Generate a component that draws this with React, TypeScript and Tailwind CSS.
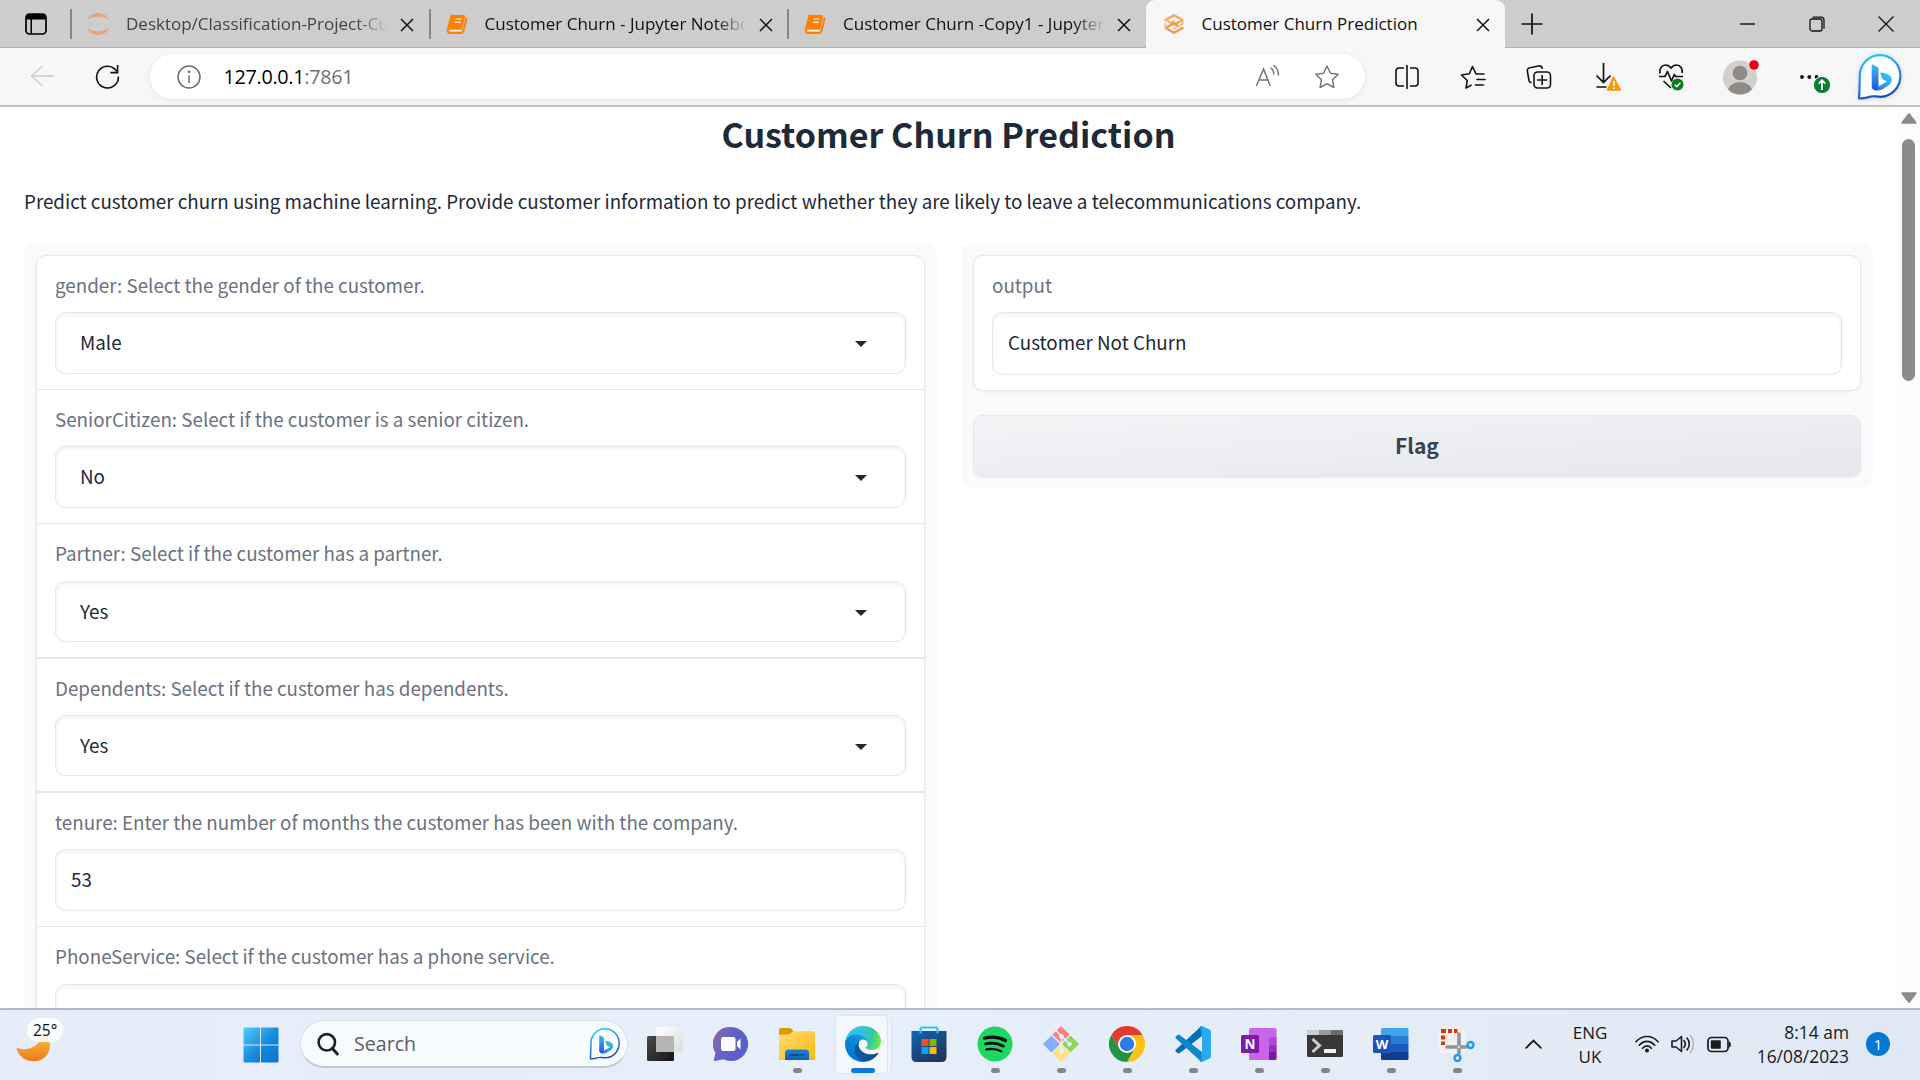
import React from 'react';

const UI = "font-['Open_Sans',sans-serif]";
const BODY = "font-['Noto_Sans_CJK_SC',sans-serif]";

/* ---------- Browser icons ---------- */

function JupyterIcon() {
  return (
    <svg width="22" height="24" viewBox="0 0 22 24" fill="#e7a57c">
      <path d="M0 8.2C2 3 6.200 1 11 1s9 2 11 7.200C19 5.800 15.500 4.800 11 4.800S3 5.800 0 8.200z" />
      <path d="M0 15.800C2 21 6.200 23 11 23s9-2 11-7.200c-3 2.400-6.500 3.400-11 3.400S3 18.200 0 15.800z" />
    </svg>
  );
}

function NotebookIcon() {
  return (
    <svg width="22" height="22" viewBox="0 0 22 22">
      <path d="M6 2h11.500c1.200 0 1.800.8 1.500 2l-3 12.500H4c-1.500 0-2 .8-1.800 2" fill="#ff8000" />
      <path d="M5.500 2.500 2 15.500c-.8 3 .2 4.500 2.500 4.500H15c1.200 0 2-.6 2.400-2L20.500 5.500" fill="none" stroke="#ff8000" strokeWidth="2" strokeLinecap="round" />
      <path d="M3 15 6 2h11l-3 13z" fill="#ff8000" />
      <path d="M9.500 6h6M8.800 9.300h6M4.500 17.500H15" stroke="#fff3e6" strokeWidth="1.200" />
    </svg>
  );
}

function GradioIcon() {
  return (
    <svg width="22" height="22" viewBox="0 0 22 22" fill="none" strokeLinejoin="round" strokeLinecap="round">
      <path d="M2.500 7 11 2.300 19.500 7 11 11.700 8 10" stroke="#f7a65a" strokeWidth="2.400" />
      <path d="M2.500 7 8 10l3-1.700" stroke="#f9b878" strokeWidth="2.200" />
      <path d="M19.500 15 11 19.700 2.500 15l8.500-4.700 3 1.700" stroke="#f19a4a" strokeWidth="2.400" />
      <path d="M19.500 11 14 14l-3 1.700M2.500 11v4M19.500 7v4" stroke="#f9b878" strokeWidth="1.900" />
    </svg>
  );
}

function CloseX({ size }: { size: number }) {
  return (
    <svg width={size} height={size} viewBox="0 0 14 14" stroke="#111" strokeWidth="1.500" className="shrink-0">
      <path d="M1 1l12 12M13 1L1 13" />
    </svg>
  );
}

function Tab({ icon, text, active, dim }: { icon: React.ReactNode; text: string; active?: boolean; dim?: boolean }) {
  return (
    <div
      className={
        active
          ? 'flex h-12 w-[359px] items-center rounded-t-[9px] bg-[#f7f7f7] pl-[17px]'
          : 'flex h-12 w-[358.5px] items-center pl-[17px]'
      }
    >
      <div className="flex w-[22px] justify-center">{icon}</div>
      <div
        className={`${UI} ml-[17px] w-[262px] overflow-hidden text-[17px] leading-[26px] whitespace-nowrap ${dim ? 'text-[#444]' : 'text-[#111]'} ${
          active ? '' : '[mask-image:linear-gradient(to_right,#000_88%,transparent)]'
        }`}
      >
        {text}
      </div>
      <div className="mt-px ml-3 flex">
        <CloseX size={14} />
      </div>
    </div>
  );
}

function TabSeparator() {
  return <div className="-mr-[2px] h-[30px] w-[2px] bg-[#858585]" />;
}

function BingLogo({ size, id }: { size: number; id: string }) {
  return (
    <svg width={size} height={size} viewBox="0 0 46 46">
      <defs>
        <linearGradient id={`${id}r`} x1="0.300" y1="0" x2="0.600" y2="1">
          <stop offset="0" stopColor="#21c8f6" />
          <stop offset="0.500" stopColor="#2f86e8" />
          <stop offset="1" stopColor="#1747c4" />
        </linearGradient>
        <linearGradient id={`${id}b`} x1="0" y1="0" x2="0" y2="1">
          <stop offset="0" stopColor="#3bbdf7" />
          <stop offset="1" stopColor="#1f4fe0" />
        </linearGradient>
        <linearGradient id={`${id}c`} x1="1" y1="0" x2="0" y2="1">
          <stop offset="0" stopColor="#37d8e6" />
          <stop offset="1" stopColor="#2468ea" />
        </linearGradient>
      </defs>
      <path
        d="M2 44.200C2.700 37 2.500 30 2.800 22.500A20.300 20.800 0 1 1 23.300 42.800C19 42.800 17 41.600 13.500 42.600 9.500 43.800 6 44.700 2 44.200z"
        fill="#fdfdff"
        stroke={`url(#${id}r)`}
        strokeWidth="2.200"
        strokeLinejoin="round"
      />
      <path d="M24.500 18.500c-.8-.3-1.300.4-1 1.200l2.300 5.600 4.200 2.200-8.500 5-4.700 3c3.500 2 7 .8 9.500-.8l5.200-3.200c5-3.500 4-9.500-1-11.500z" fill={`url(#${id}c)`} />
      <path d="M15.500 10.600 20 12.700c1 .5 1.500 1.200 1.500 2.300v17.500l-1.600 3.800c-3 .6-5.200-1.200-5.200-4V11.100c0-.5.400-.7.800-.5z" fill={`url(#${id}b)`} />
    </svg>
  );
}

function Slot({ children, className = 'w-[66px]' }: { children: React.ReactNode; className?: string }) {
  return <div className={`flex shrink-0 items-center justify-center ${className}`}>{children}</div>;
}

function Toolbar() {
  return (
    <div className="flex h-[57px] shrink-0 items-center bg-[#f7f7f7] pl-[30px]">
      <svg width="24" height="22" viewBox="0 0 24 24" preserveAspectRatio="none" fill="none" stroke="#cbcbcb" strokeWidth="1.500" className="-mt-[2px]">
        <path d="M12 1.500 1.500 12 12 22.500M1.500 12H24" />
      </svg>
      <svg width="25" height="25" viewBox="0 0 26 26" fill="none" stroke="#111" strokeWidth="1.700" className="ml-[41px]">
        <path d="M22.500 7.500A11.300 11.300 0 1 0 24.300 13M23.500 1v8H16" />
      </svg>
      <div className="ml-[30px] flex h-[45px] w-[1215px] items-center rounded-full bg-white pl-[27px] shadow-[0_1px_5px_rgba(0,0,0,0.090)]">
        <svg width="24" height="24" viewBox="0 0 24 24" fill="none" stroke="#6c6c6c" strokeWidth="1.500">
          <circle cx="12" cy="12" r="11" />
          <path d="M12 10.500v7.500" />
          <circle cx="12" cy="6.800" r="0.600" fill="#6c6c6c" />
        </svg>
        <div className={`${UI} ml-[22.500px] text-[19.800px] leading-7 tracking-[-0.300px] text-black`}>
          127.0.0.1<span className="text-[#6f6f6f]">:7861</span>
        </div>
        <div className="flex-1" />
        <svg width="26" height="24" viewBox="0 0 26 24" fill="none" stroke="#767676" strokeWidth="1.500" strokeLinecap="round" className="-mt-[2px]">
          <path d="M2.500 21.500 9.500 5l6.500 16.500M5 16h9M17 4c2 1.600 2.800 3.500 2.800 6M20 1.500c3 2.200 4.300 5.500 4.500 9.500" />
        </svg>
        <svg width="26" height="26" viewBox="0 0 26 26" fill="none" stroke="#767676" strokeWidth="1.500" strokeLinejoin="round" className="mr-[25px] ml-[34px]">
          <path d="m13 2 3.400 7.200 7.800 1-5.700 5.500 1.400 7.800L13 19.700l-6.900 3.800 1.400-7.800-5.700-5.500 7.800-1z" />
        </svg>
      </div>
      <div className="ml-[9px] flex items-center">
        <Slot>
          <svg width="24" height="24" viewBox="0 0 24 24" fill="none" stroke="#111" strokeWidth="1.600">
            <path d="M9 3H4C2 3 1 4 1 6v12c0 2 1 3 3 3h5M15 3h5c2 0 3 1 3 3v12c0 2-1 3-3 3h-5M12 0v24" />
          </svg>
        </Slot>
        <Slot>
          <svg width="26" height="24" viewBox="0 0 26 24" fill="none" stroke="#111" strokeWidth="1.600" strokeLinejoin="round" strokeLinecap="round">
            <path d="M11 20.200 6 23l1.200-7.500L1.500 10l7.800-1.200L12.500 1.500 16 9h8M17 14.500h8M15.500 20h8" />
          </svg>
        </Slot>
        <Slot>
          <svg width="26" height="26" viewBox="0 0 26 26" fill="none" stroke="#111" strokeWidth="1.600" strokeLinecap="round">
            <path d="M5 18.500C3.800 18.200 3.200 17.500 3 16.500L1.400 7.500C1 5.500 2 4.200 4 3.800L12.500 2c2-.4 3.200.4 3.700 2.300" />
            <rect x="8" y="8" width="16.500" height="16" rx="3.500" />
            <path d="M16.200 11.500v9M11.700 16h9" />
          </svg>
        </Slot>
        <Slot>
          <svg width="28" height="30" viewBox="0 0 28 30" fill="none" stroke="#111" strokeWidth="1.700" className="ml-[6px]">
            <path d="M9.500 1v19M2.500 13.500l7 7 7-7M2.500 25h10" />
            <path d="M19.500 15 13.500 28h13z" fill="#f59a0c" stroke="#f59a0c" strokeWidth="1.500" strokeLinejoin="round" />
            <path d="M20 19v5M20 25.500v1.500" stroke="#fff" />
          </svg>
        </Slot>
        <Slot>
          <svg width="26" height="28" viewBox="0 0 26 28" fill="none" stroke="#111" strokeWidth="1.700" strokeLinejoin="round">
            <path d="M2 10.500C1 5.500 4 2 7.500 2c2.500 0 4 1 5.500 3 1.500-2 3-3 5.500-3 4 0 6.500 4 5.500 8M1 13.500h6l2.500-5 4 9.500 2.800-6.500 1.200 2H25M5.500 18l7.500 7" />
            <circle cx="19.500" cy="21.500" r="6" fill="#0f7b1c" stroke="none" />
            <path d="m16.800 21.700 2 2 3.500-4" stroke="#fff" strokeWidth="1.500" />
          </svg>
        </Slot>
        <Slot className="w-[72px]">
          <svg width="36" height="36" viewBox="0 0 36 36" className="ml-[2px]">
            <defs>
              <clipPath id="avatarClip">
                <circle cx="17" cy="18.500" r="17" />
              </clipPath>
            </defs>
            <circle cx="17" cy="18.500" r="17" fill="#d2d0ce" />
            <g clipPath="url(#avatarClip)" fill="#8d8a87">
              <circle cx="17" cy="14" r="7.300" />
              <ellipse cx="17" cy="32" rx="12" ry="9" />
            </g>
            <circle cx="31" cy="6" r="5.500" fill="#f7f7f7" />
            <circle cx="31" cy="6" r="4.800" fill="#e60012" />
          </svg>
        </Slot>
        <Slot>
          <svg width="34" height="34" viewBox="0 0 34 34" className="ml-[11px]">
            <g fill="#111">
              <circle cx="4" cy="17" r="1.900" />
              <circle cx="11.300" cy="17" r="1.900" />
              <circle cx="18.600" cy="17" r="1.900" />
            </g>
            <circle cx="24" cy="25" r="8.600" fill="#0f7c33" stroke="#f7f7f7" strokeWidth="1" />
            <path d="M24 30v-9.500M20.700 23.700 24 20.300l3.300 3.400" stroke="#fff" strokeWidth="1.700" fill="none" />
          </svg>
        </Slot>
        <Slot className="ml-[9px] w-[58px] drop-shadow-sm">
          <BingLogo size={46} id="tb" />
        </Slot>
      </div>
    </div>
  );
}

function TabStrip() {
  return (
    <div className="flex h-12 shrink-0 items-center bg-[#cdcdcd] shadow-[inset_0_-1px_1px_rgba(0,0,0,0.150)]">
      <div className="flex w-[70px] justify-center">
        <svg width="22" height="22" viewBox="0 0 22 22" className="ml-[2px]">
          <rect x="1" y="1" width="20" height="20" rx="3.500" fill="none" stroke="#000" strokeWidth="1.700" />
          <path d="M1 6.500V4a3 3 0 0 1 3-3h14a3 3 0 0 1 3 3v2.500z" />
          <path d="M6.200 6v15" stroke="#000" strokeWidth="1.500" />
        </svg>
      </div>
      <TabSeparator />
      <Tab icon={<JupyterIcon />} text="Desktop/Classification-Project-Customer" dim />
      <TabSeparator />
      <Tab icon={<NotebookIcon />} text="Customer Churn - Jupyter Notebook" />
      <TabSeparator />
      <Tab icon={<NotebookIcon />} text="Customer Churn -Copy1 - Jupyter Notebook" />
      <Tab icon={<GradioIcon />} text="Customer Churn Prediction" active />
      <svg width="22" height="22" viewBox="0 0 22 22" stroke="#111" strokeWidth="1.700" className="ml-4">
        <path d="M11 0.500v21M0.500 11h21" />
      </svg>
      <div className="flex-1" />
      <svg width="15" height="16" viewBox="0 0 15 16" stroke="#111" strokeWidth="1.400">
        <path d="M0 8h15" />
      </svg>
      <svg width="16" height="16" viewBox="0 0 16 16" fill="none" stroke="#111" strokeWidth="1.300" className="ml-[54px]">
        <rect x="1" y="3" width="12" height="12" rx="2" />
        <path d="M3.500 1.200h8.500a3 3 0 0 1 3 3v8.500" />
      </svg>
      <svg width="16" height="16" viewBox="0 0 16 16" stroke="#111" strokeWidth="1.300" className="mr-[26px] ml-[53px]">
        <path d="M0.500 0.500l15 15M15.500 0.500l-15 15" />
      </svg>
    </div>
  );
}

/* ---------- Page content ---------- */

type FieldData = { label: string; value: string; select: boolean; row: string; box: string };

const fields: FieldData[] = [
  { label: 'gender: Select the gender of the customer.', value: 'Male', select: true, row: 'h-[134px] border-b', box: 'mt-[11px] h-[62px]' },
  { label: 'SeniorCitizen: Select if the customer is a senior citizen.', value: 'No', select: true, row: 'h-[134px] border-b', box: 'mt-[11px] h-[62px]' },
  { label: 'Partner: Select if the customer has a partner.', value: 'Yes', select: true, row: 'h-[135px] border-b-2', box: 'mt-[12px] h-[61px]' },
  { label: 'Dependents: Select if the customer has dependents.', value: 'Yes', select: true, row: 'h-[134px] border-b-2', box: 'mt-[11px] h-[61px]' },
  { label: 'tenure: Enter the number of months the customer has been with the company.', value: '53', select: false, row: 'h-[134px] border-b', box: 'mt-[11px] h-[62px]' },
  { label: 'PhoneService: Select if the customer has a phone service.', value: '', select: true, row: 'h-[134px] border-b', box: 'mt-[12px] h-[62px]' },
];

function FieldBox({ value, select, box }: { value: string; select: boolean; box: string }) {
  return (
    <div
      className={`flex shrink-0 items-center rounded-[10px] border border-gray-200 bg-white text-gray-800 shadow-[inset_0_2px_4px_rgba(0,0,0,0.060)] ${box} ${
        select ? 'pl-6' : 'pl-[15px]'
      }`}
    >
      <span className="-mt-[2px] flex-1">{value}</span>
      {select && (
        <svg width="12" height="6" viewBox="0 0 12 6" fill="#1f2937" className="mt-[2px] mr-[38px]">
          <path d="M0 0h12L6 6z" />
        </svg>
      )}
    </div>
  );
}

function Field({ f }: { f: FieldData }) {
  return (
    <div className={`flex shrink-0 flex-col border-gray-200 px-[18px] pt-[14px] ${f.row}`}>
      <div className="h-[31px] leading-[30px] text-gray-500">{f.label}</div>
      <FieldBox value={f.value} select={f.select} box={f.box} />
    </div>
  );
}

function Page() {
  return (
    <div className={`${BODY} flex min-h-0 flex-1 overflow-hidden bg-white text-[18.800px] leading-[30px]`}>
      <div className="flex flex-1 flex-col pr-[24px] pl-[24px]">
        <h1 className="mt-[6px] text-center text-[34px] leading-[42px] font-bold text-gray-800">Customer Churn Prediction</h1>
        <p className="mt-[31px] text-gray-800">
          Predict customer churn using machine learning. Provide customer information to predict whether they are likely to leave a telecommunications
          company.
        </p>
        <div className="mt-[27px] flex min-h-0 flex-1 items-start gap-6">
          <div className="h-full w-[913px] overflow-hidden rounded-t-[12px] bg-gray-50 px-3 pt-3">
            <div className="flex flex-col rounded-t-[10px] border border-gray-200 bg-white shadow-[0_1px_3px_rgba(0,0,0,0.060)]">
              {fields.map((f) => (
                <Field key={f.label} f={f} />
              ))}
            </div>
          </div>
          <div className="flex h-[246px] w-[912px] flex-col rounded-[12px] bg-gray-50 px-3 pt-3">
            <div className="h-[136px] shrink-0 rounded-[10px] border border-gray-200 bg-white px-[18px] pt-[14px] shadow-[0_1px_3px_rgba(0,0,0,0.060)]">
              <div className="h-[31px] leading-[30px] text-gray-500">output</div>
              <FieldBox value="Customer Not Churn" select={false} box="mt-[11px] h-[63px] pb-px" />
            </div>
            <button className="mt-6 h-[62px] rounded-[10px] border border-gray-200 bg-linear-to-br from-gray-100 to-gray-200 pb-[3px] text-[21px] font-bold text-gray-700 shadow-[0_1px_2px_rgba(0,0,0,0.050)]">
              Flag
            </button>
          </div>
        </div>
      </div>
      <div className="flex w-[23px] flex-col items-center bg-[#fcfcfc] pt-[6px] pb-[5px]">
        <svg width="16" height="11" viewBox="0 0 16 11" fill="#8b8b8b">
          <path d="M7 .8a1.200 1.200 0 0 1 2 0l6.500 8.400c.5.800.2 1.600-.8 1.600H1.300c-1 0-1.300-.8-.8-1.600z" />
        </svg>
        <div className="mt-[15px] h-[242px] w-[13px] rounded-full bg-[#8b8b8b]" />
        <div className="flex-1" />
        <svg width="16" height="11" viewBox="0 0 16 11" fill="#8b8b8b">
          <path d="M7 10.200a1.200 1.200 0 0 0 2 0l6.500-8.400C16 1 15.700.2 14.700.2H1.300C.3.200 0 1 .5 1.800z" />
        </svg>
      </div>
    </div>
  );
}

/* ---------- Taskbar icons ---------- */

function WindowsLogo() {
  return (
    <svg width="36" height="36" viewBox="0 0 36 36">
      <defs>
        <linearGradient id="win" x1="0" y1="0" x2="36" y2="36" gradientUnits="userSpaceOnUse">
          <stop offset="0" stopColor="#4fd0fb" />
          <stop offset="0.550" stopColor="#1489dd" />
          <stop offset="1" stopColor="#0873ce" />
        </linearGradient>
      </defs>
      <path d="M1.500.5H17v17H.5v-16q0-1 1-1zM18 .5h16.500q1 0 1 1v16H18zM.5 18.500H17v17H1.500q-1 0-1-1zM18 18.500h17.500v16q0 1-1 1H18z" fill="url(#win)" />
    </svg>
  );
}

function TaskViewIcon() {
  return (
    <svg width="36" height="36" viewBox="0 0 36 36">
      <defs>
        <linearGradient id="tv1" x1="0" y1="0" x2="1" y2="1">
          <stop offset="0" stopColor="#4a4a4a" />
          <stop offset="1" stopColor="#151515" />
        </linearGradient>
        <linearGradient id="tv2" x1="0" y1="0" x2="1" y2="1">
          <stop offset="0" stopColor="#ffffff" />
          <stop offset="1" stopColor="#dcdcdc" />
        </linearGradient>
      </defs>
      <rect x="0" y="10" width="27" height="25" rx="1.500" fill="url(#tv1)" />
      <rect x="9" y="1" width="27" height="25" rx="1.500" fill="url(#tv2)" />
      <path d="M9 10h18v16H10q-1 0-1-1z" fill="#b5b5b5" />
    </svg>
  );
}

function ChatIcon() {
  return (
    <svg width="36" height="36" viewBox="0 0 36 36">
      <defs>
        <linearGradient id="chat" x1="0" y1="0.200" x2="1" y2="0.700">
          <stop offset="0" stopColor="#8a68a6" />
          <stop offset="0.500" stopColor="#6161c8" />
          <stop offset="1" stopColor="#5560cc" />
        </linearGradient>
      </defs>
      <path d="M18 1a17 17 0 1 1-7.500 32.200L2 35c-1 .2-1.500-.5-1.200-1.300L2.500 27A17 17 0 0 1 18 1z" fill="url(#chat)" />
      <rect x="8" y="11" width="14.500" height="14" rx="2.500" fill="#fff" />
      <path d="m24 16 3.500-3.500v11L24 20z" fill="#fff" />
    </svg>
  );
}

function FolderIcon() {
  return (
    <svg width="36" height="36" viewBox="0 0 36 36">
      <defs>
        <linearGradient id="fold" x1="0" y1="0" x2="1" y2="1">
          <stop offset="0" stopColor="#ffdc72" />
          <stop offset="1" stopColor="#fbb70e" />
        </linearGradient>
        <linearGradient id="foldb" x1="0" y1="0" x2="0" y2="1">
          <stop offset="0" stopColor="#1784d8" />
          <stop offset="1" stopColor="#0f62ac" />
        </linearGradient>
      </defs>
      <path d="M0 3.500Q0 2 1.500 2H10q1.500 0 2.500 1l2 2-3 4H0z" fill="#dc9a06" />
      <path d="M0 8.500h9q1.500 0 2.500-1l1.500-1.500q.8-.8 2-.8h19.500q1.500 0 1.500 1.500V33q0 1-1 1H1q-1 0-1-1z" fill="url(#fold)" />
      <path d="M6 34v-7q0-3.500 3.500-3.500h17q3.500 0 3.500 3.500v7z" fill="url(#foldb)" />
      <rect x="10.500" y="28" width="15" height="1.800" rx="0.900" fill="#0a4887" />
    </svg>
  );
}

function EdgeIcon() {
  return (
    <svg width="36" height="36" viewBox="0 0 256 256">
      <defs>
        <linearGradient id="edA" x1="63" y1="178" x2="241" y2="178" gradientUnits="userSpaceOnUse">
          <stop offset="0" stopColor="#0c59a4" />
          <stop offset="1" stopColor="#114a8b" />
        </linearGradient>
        <linearGradient id="edC" x1="157" y1="100" x2="46" y2="221" gradientUnits="userSpaceOnUse">
          <stop offset="0" stopColor="#1b9de2" />
          <stop offset="0.160" stopColor="#1595df" />
          <stop offset="0.670" stopColor="#0680d7" />
          <stop offset="1" stopColor="#0078d4" />
        </linearGradient>
        <radialGradient id="edE" cx="26" cy="45" r="230" gradientUnits="userSpaceOnUse">
          <stop offset="0" stopColor="#35c1f1" />
          <stop offset="0.400" stopColor="#2fc2df" />
          <stop offset="0.750" stopColor="#36c9a0" />
          <stop offset="1" stopColor="#66eb4a" />
        </radialGradient>
      </defs>
      <path fill="url(#edA)" d="M231 190.500c-3.400 1.800-6.900 3.400-10.500 4.700a101.900 101.900 0 0 1-35.900 6.400c-47.300 0-88.500-32.500-88.500-74.300a31.500 31.500 0 0 1 16.400-27.300c-42.800 1.800-53.800 46.400-53.800 72.500 0 74 68.100 81.400 82.800 81.400 7.900 0 19.800-2.300 27-4.600l1.300-.4a128.300 128.300 0 0 0 66.600-52.800 4 4 0 0 0-5.400-5.600z" />
      <path fill="url(#edC)" d="M105.700 241.400a79.200 79.200 0 0 1-22.700-21.300 80.700 80.700 0 0 1 29.500-120c3.200-1.500 8.500-4.100 15.600-4a32.400 32.400 0 0 1 25.700 13 31.900 31.900 0 0 1 6.300 18.700c0-.2 24.500-79.600-80-79.600-43.900 0-80 41.600-80 78.200a130.200 130.200 0 0 0 12.100 56 128 128 0 0 0 156.400 67 75.500 75.500 0 0 1-62.800-8z" />
      <path fill="url(#edE)" d="M152.300 148.900c-.9 1-3.400 2.500-3.400 5.600 0 2.600 1.700 5.200 4.800 7.300 14.300 10 41.400 8.600 41.500 8.600a59.600 59.600 0 0 0 30.300-8.300 61.400 61.400 0 0 0 30.400-52.900c.3-22.400-8-37.300-11.300-43.900C223.500 23.900 177.700 0 128 0A128 128 0 0 0 0 126.200c.5-36.500 36.800-66 80-66 3.500 0 23.500.3 42 10a72.600 72.600 0 0 1 30.900 29.300c6.100 10.600 7.200 24.100 7.200 29.500s-2.700 13.300-7.800 19.900z" />
    </svg>
  );
}

function StoreIcon() {
  return (
    <svg width="36" height="36" viewBox="0 0 36 36">
      <defs>
        <linearGradient id="store" x1="0" y1="0" x2="0.600" y2="1">
          <stop offset="0" stopColor="#0d66b4" />
          <stop offset="1" stopColor="#22355f" />
        </linearGradient>
      </defs>
      <path d="M.5 5h35v26q0 5-5 5h-25q-5 0-5-5z" fill="url(#store)" />
      <path d="M9.500 7.500V3q0-1.500 1.500-1.500h14q1.500 0 1.500 1.500v4.500" fill="none" stroke="#2fc3f6" strokeWidth="2" />
      <rect x="10.500" y="13" width="7" height="7" fill="#f25022" />
      <rect x="18.500" y="13" width="7" height="7" fill="#7fba00" />
      <rect x="10.500" y="21" width="7" height="7" fill="#00a4ef" />
      <rect x="18.500" y="21" width="7" height="7" fill="#ffb900" />
    </svg>
  );
}

function SpotifyIcon() {
  return (
    <svg width="36" height="36" viewBox="0 0 36 36" fill="none" stroke="#0b0b0b" strokeLinecap="round">
      <circle cx="18" cy="18" r="17.500" fill="#1ed760" stroke="none" />
      <path d="M7.500 12.200c7-1.900 14.500-1.200 21 2.300" strokeWidth="3.200" />
      <path d="M8.500 18c6-1.600 12.500-.9 18 2.200" strokeWidth="2.700" />
      <path d="M9.500 23.400c5-1.200 10.200-.6 14.800 2" strokeWidth="2.200" />
    </svg>
  );
}

function GitIcon() {
  return (
    <svg width="36" height="36" viewBox="0 0 36 36">
      <path d="m18 0 8.500 8.500L18 17 9.500 8.500z" fill="#fb8080" />
      <path d="m27.500 9.500 8.500 8.500-8.500 8.500L19 18z" fill="#8fd45c" />
      <path d="m8.500 9.500 8.500 8.500-8.500 8.500L0 18z" fill="#82aefc" />
      <path d="m18 19 8.500 8.500L18 36l-8.500-8.500z" fill="#ffe27d" />
      <path d="m13 4.500 5.500 5.500v8M18.500 10l8 8M18.500 18v6" stroke="#e8eefa" strokeWidth="1.700" fill="none" />
      <circle cx="18.500" cy="10.500" r="2.300" fill="#e8eefa" />
      <circle cx="18.500" cy="25" r="2.500" fill="#e8eefa" />
      <circle cx="26.500" cy="18" r="2.300" fill="#e8eefa" />
    </svg>
  );
}

function ChromeIcon() {
  return (
    <svg width="36" height="36" viewBox="0 0 36 36">
      <path d="M18 9h15.600A18 18 0 0 1 18 36l7.800-13.500z" fill="#fbc116" />
      <path d="M2.400 9A18 18 0 0 0 18 36l7.800-13.500H10.200z" fill="#229342" />
      <path d="M2.400 9a18 18 0 0 1 31.200 0H18l-7.800 13.500z" fill="#e33b2e" />
      <circle cx="18" cy="18" r="9" fill="#fff" />
      <circle cx="18" cy="18" r="7.200" fill="#2f7bea" />
    </svg>
  );
}

function CodeIcon() {
  return (
    <svg width="36" height="36" viewBox="0 0 36 36">
      <path d="M26.500 0 1 23.500q-1.200 1 0 2.200L2.600 27q1 .9 2.100.1L27 10z" fill="#0471b6" />
      <path d="M26.500 36 1 12.500q-1.200-1 0-2.200L2.600 9q1-.9 2.100-.1L27 26z" fill="#0c87cf" />
      <path d="m27 0 7.500 3.600Q36 4.300 36 6v24q0 1.700-1.500 2.400L27 36z" fill="#29a9ef" />
      <path d="M27 0v36q-1.500 0-2.500-1l2.500-9V10l-2.500-9Q25.500 0 27 0z" fill="#1b8fd8" />
    </svg>
  );
}

function OneNoteIcon() {
  return (
    <svg width="36" height="36" viewBox="0 0 36 36">
      <rect x="8" y="2" width="27.500" height="32" rx="1.500" fill="#ca64ea" />
      <path d="M28 11h7.500v8H28z" fill="#ae4bd5" />
      <path d="M28 19h7.500v7H28z" fill="#9332bf" />
      <path d="M28 26h7.500v6.500q0 1.500-1.500 1.500h-6z" fill="#7719aa" />
      <rect x="0" y="9" width="18" height="18" rx="1.500" fill="#7a1bab" />
      <text x="9" y="22.800" textAnchor="middle" fontSize="13.500" fontWeight="700" fill="#fff" fontFamily="Open Sans, sans-serif">N</text>
    </svg>
  );
}

function TerminalIcon() {
  return (
    <svg width="36" height="36" viewBox="0 0 36 36">
      <rect x="0" y="4" width="36" height="27" rx="1.500" fill="#383838" />
      <path d="M0 9V5.500Q0 4 1.500 4H12v5z" fill="#cfcfcf" />
      <path d="M12 4h12v5H12z" fill="#9a9a9a" />
      <path d="M24 4h10.500Q36 4 36 5.500V9H24z" fill="#6b6b6b" />
      <path d="m5.500 13 7 6.500-7 6.500" fill="none" stroke="#cfcfcf" strokeWidth="3" />
      <rect x="17" y="23" width="12" height="4" rx="0.500" fill="#f2f2f2" />
    </svg>
  );
}

function WordIcon() {
  return (
    <svg width="36" height="36" viewBox="0 0 36 36">
      <path d="M8 3.500Q8 2 9.500 2H34q1.500 0 1.500 1.500V10H8z" fill="#41a5ee" />
      <path d="M8 10h27.500v8H8z" fill="#2b7cd3" />
      <path d="M8 18h27.500v8H8z" fill="#185abd" />
      <path d="M8 26h27.500v6.500q0 1.500-1.500 1.500H9.500Q8 34 8 32.500z" fill="#103f91" />
      <rect x="0" y="9" width="18" height="18" rx="1.500" fill="#1a56b8" />
      <text x="9" y="22.600" textAnchor="middle" fontSize="13" fontWeight="700" fill="#fff" fontFamily="Open Sans, sans-serif">W</text>
    </svg>
  );
}

function SnipIcon() {
  return (
    <svg width="36" height="36" viewBox="0 0 36 36">
      <rect x="0" y="0" width="26" height="27" rx="2" fill="#f1f0ee" />
      <g fill="#d83b01">
        <path d="M2 3h5v4H2zM9 3h4v4H9zM15 3h3.500v4H15z" />
        <path d="M2 9.500h4v4H2zM2 15.500h4v3.500H2z" />
      </g>
      <path d="M20 8v19M8 21h19" stroke="#8b939c" strokeWidth="3.500" strokeLinecap="round" />
      <circle cx="19.800" cy="21" r="1.200" fill="#e6e6e6" />
      <circle cx="31.500" cy="19" r="3" fill="none" stroke="#1e9de8" strokeWidth="2.400" />
      <circle cx="18.500" cy="32" r="3" fill="none" stroke="#1e9de8" strokeWidth="2.400" />
    </svg>
  );
}

const apps: { name: string; icon: React.ReactNode; running?: boolean; active?: boolean }[] = [
  { name: 'Task view', icon: <TaskViewIcon /> },
  { name: 'Chat', icon: <ChatIcon /> },
  { name: 'Explorer', icon: <FolderIcon />, running: true },
  { name: 'Edge', icon: <EdgeIcon />, active: true },
  { name: 'Store', icon: <StoreIcon /> },
  { name: 'Spotify', icon: <SpotifyIcon />, running: true },
  { name: 'Git', icon: <GitIcon />, running: true },
  { name: 'Chrome', icon: <ChromeIcon />, running: true },
  { name: 'Code', icon: <CodeIcon />, running: true },
  { name: 'OneNote', icon: <OneNoteIcon />, running: true },
  { name: 'Terminal', icon: <TerminalIcon />, running: true },
  { name: 'Word', icon: <WordIcon />, running: true },
  { name: 'Snip', icon: <SnipIcon />, running: true },
];

function AppButton({ icon, running, active }: { icon: React.ReactNode; running?: boolean; active?: boolean }) {
  return (
    <div className="flex h-full w-[66px] justify-center">
      <div
        className={
          active
            ? 'mt-[5px] -ml-[3px] flex h-[59px] w-[53px] flex-col items-center rounded-[5px] border border-[#dbe3ee] bg-[#f4f8fd] pt-[10px] pl-[3px] shadow-[4px_0_0_-1px_#edf2fa,5px_0_0_-1px_#d9e1ec]'
            : 'mt-[5px] flex h-[59px] w-[53px] flex-col items-center pt-[11px]'
        }
      >
        {icon}
        {active && <div className="mt-[6px] h-[5px] w-6 rounded-full bg-[#0b7ad7]" />}
        {running && <div className="mt-[6px] h-[5px] w-[9px] rounded-full bg-[#83878c]" />}
      </div>
    </div>
  );
}

function Taskbar() {
  return (
    <div className={`${UI} flex h-[72px] shrink-0 border-t-2 border-[#b3bbc6] bg-linear-to-r from-[#e7ecf9] via-[#e6eff9] to-[#e1e8f5]`}>
      <div className="flex w-[243px] pl-[16px]">
        <div className="relative mt-[8px] h-[46px] w-[48px]">
          <svg width="34" height="30" viewBox="0 0 34 30" className="absolute top-[15px] left-0">
            <defs>
              <linearGradient id="moon" x1="0" y1="0" x2="0" y2="1">
                <stop offset="0" stopColor="#f7c64e" />
                <stop offset="1" stopColor="#ef7a17" />
              </linearGradient>
            </defs>
            <path d="M27 0C36 6 36 18 28.500 24.500 19 32 4.500 28 .8 16.500c-.3-1.200.4-1.600 1.400-1.300C13 19 25 12 27 0z" fill="url(#moon)" />
          </svg>
          <div className="absolute top-0 left-[11px] h-[24px] w-[36px] rounded-full bg-white/85 pl-[6px] text-[15.500px] leading-[24px] text-[#111]">25°</div>
        </div>
      </div>
      <div className="mt-[17px]">
        <WindowsLogo />
      </div>
      <div className="mt-[10px] ml-[21px] flex h-[48px] w-[328px] items-center rounded-full border border-b-2 border-[#d7e0ea] border-b-[#bfc9d4] bg-[#f8fbfe] pl-[16px]">
        <svg width="22" height="24" viewBox="0 0 22 24" fill="none" stroke="#222" strokeWidth="2.600" strokeLinecap="round">
          <circle cx="9.800" cy="10.300" r="8.200" />
          <path d="m15.500 16.500 4.800 5.500" strokeWidth="3" />
        </svg>
        <span className="ml-[15px] text-[19.600px] leading-[26px] text-[#5b5f63]">Search</span>
        <div className="mt-px mr-[6px] ml-auto">
          <BingLogo size={32} id="sb" />
        </div>
      </div>
      <div className="ml-[4px] flex">
        {apps.map((a) => (
          <AppButton key={a.name} icon={a.icon} running={a.running} active={a.active} />
        ))}
      </div>
      <div className="mt-[29px] ml-[35px]">
        <svg width="17" height="10" viewBox="0 0 17 10" fill="none" stroke="#1a1a1a" strokeWidth="1.900" strokeLinecap="round">
          <path d="m1.200 8.800 7.300-7.300 7.300 7.300" />
        </svg>
      </div>
      <div className="mt-[11px] ml-[20px] w-[56px] text-center text-[17px] leading-6 text-[#1a1a1a]">
        <div>ENG</div>
        <div>UK</div>
      </div>
      <div className="mt-[22px] ml-[17px] flex h-6 items-center gap-[12px] text-[#1a1a1a]">
        <svg width="24" height="18" viewBox="0 0 24 18" fill="none" stroke="currentColor" strokeWidth="1.700" strokeLinecap="round">
          <path d="M1 6.800C7-.3 17-.3 23 6.800M4.300 10.200C8.800 5 15.200 5 19.700 10.200M7.600 13.200c2.600-3 6.200-3 8.800 0" />
          <circle cx="12" cy="15.500" r="2" fill="currentColor" stroke="none" />
        </svg>
        <svg width="24" height="20" viewBox="0 0 24 20" fill="none" stroke="currentColor" strokeWidth="1.600" strokeLinecap="round" strokeLinejoin="round">
          <path d="M1 7v6h4l5.500 4.500v-15L5 7zM13 6.500c1.500 2 1.500 5 0 7M16 4c3 3.500 3 8.500 0 12" />
          <path d="M19.500 1.500c4 5 4 12 0 17" stroke="#b3b8c0" />
        </svg>
        <svg width="25" height="17" viewBox="0 0 25 17">
          <rect x="1" y="1.500" width="20" height="14" rx="3.500" fill="none" stroke="currentColor" strokeWidth="1.700" />
          <rect x="3.800" y="4.200" width="10" height="8.600" rx="1" fill="currentColor" />
          <path d="M22 5.500c2.500.3 2.500 5.700 0 6z" fill="currentColor" />
        </svg>
      </div>
      <div className="mt-[10px] ml-auto text-right text-[17.400px] leading-6 text-[#1a1a1a]">
        <div>8:14 am</div>
        <div>16/08/2023</div>
      </div>
      <div className="mt-[22px] mr-[30px] ml-[17px] flex h-6 w-6 items-center justify-center rounded-full bg-[#0578d6] text-[15px] leading-none text-white">1</div>
    </div>
  );
}

export default function App() {
  return (
    <div className="flex h-[1080px] w-[1920px] flex-col overflow-hidden bg-white">
      <TabStrip />
      <Toolbar />
      <div className="h-[2px] shrink-0 bg-[#c2c2c2]" />
      <Page />
      <Taskbar />
    </div>
  );
}
